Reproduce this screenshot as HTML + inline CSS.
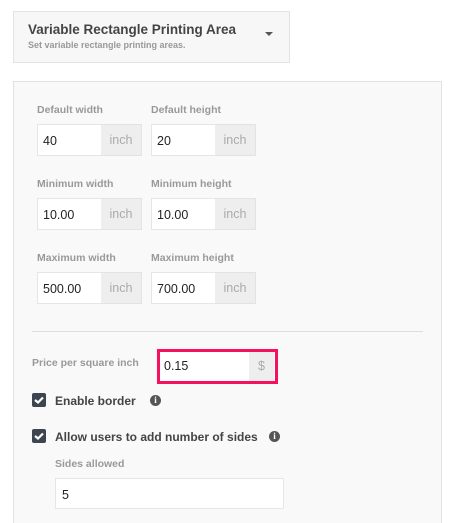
<!DOCTYPE html>
<html><head><style>
*{box-sizing:border-box;margin:0;padding:0}
html,body{width:455px;height:523px;overflow:hidden}
body{background:#fff;font-family:"Liberation Sans",sans-serif;position:relative}
.a{position:absolute}
.hdr{left:13px;top:11px;width:277px;height:52px;background:#f7f7f7;border:1px solid #e3e3e3}
.panel{left:13px;top:81px;width:429px;height:442px;background:#f9f9f9;border:1px solid #e2e2e2;border-bottom:none}
.lbl{font-size:10.5px;font-weight:bold;color:#999}
.inp{background:#fff;border:1px solid #e6e6e6;height:32px;font-size:12.5px;color:#222;padding:9px 0 0 5px}
.add{background:#eee;border:1px solid #e3e3e3;border-left:none;height:32px;font-size:12.5px;color:#aaa;text-align:center;padding-top:8px}
.cb{width:14px;height:14px;background:#3d4550;border-radius:2px}
.cb svg{position:absolute;left:2px;top:3px}
.ct{font-size:12px;font-weight:bold;color:#444}
.info{width:11px;height:11px;border-radius:50%;background:#555;color:#fff;font-size:9px;font-weight:bold;text-align:center;line-height:11px;font-family:"Liberation Serif",serif}
</style></head><body>
<div class="a hdr"></div>
<div class="a" style="left:28px;top:22px;font-size:13.5px;font-weight:bold;color:#444">Variable Rectangle Printing Area</div>
<div class="a" style="left:28px;top:40px;font-size:9px;font-weight:bold;color:#999">Set variable rectangle printing areas.</div>
<div class="a" style="left:265px;top:32px;width:0;height:0;border-left:4px solid transparent;border-right:4px solid transparent;border-top:4px solid #555"></div>
<div class="a panel"></div>

<div class="a lbl" style="left:37px;top:104px">Default width</div>
<div class="a lbl" style="left:151px;top:104px">Default height</div>
<div class="a inp" style="left:37px;top:124px;width:65px">40</div><div class="a add" style="left:101px;top:124px;width:41px">inch</div>
<div class="a inp" style="left:151px;top:124px;width:65px">20</div><div class="a add" style="left:215px;top:124px;width:41px">inch</div>

<div class="a lbl" style="left:37px;top:178px">Minimum width</div>
<div class="a lbl" style="left:151px;top:178px">Minimum height</div>
<div class="a inp" style="left:37px;top:198px;width:65px">10.00</div><div class="a add" style="left:101px;top:198px;width:41px">inch</div>
<div class="a inp" style="left:151px;top:198px;width:65px">10.00</div><div class="a add" style="left:215px;top:198px;width:41px">inch</div>

<div class="a lbl" style="left:37px;top:252px">Maximum width</div>
<div class="a lbl" style="left:151px;top:252px">Maximum height</div>
<div class="a inp" style="left:37px;top:272px;width:65px">500.00</div><div class="a add" style="left:101px;top:272px;width:41px">inch</div>
<div class="a inp" style="left:151px;top:272px;width:65px">700.00</div><div class="a add" style="left:215px;top:272px;width:41px">inch</div>

<div class="a" style="left:32px;top:331px;width:391px;height:1px;background:#ddd"></div>

<div class="a lbl" style="left:32px;top:357px">Price per square inch</div>
<div class="a" style="left:157px;top:349px;width:121px;height:35px;border:3px solid #f7105e;background:#fff"></div>
<div class="a" style="left:164px;top:359px;font-size:12.5px;color:#222">0.15</div>
<div class="a" style="left:249px;top:352px;width:25px;height:29px;background:#eee;color:#aaa;font-size:12.5px;text-align:center;padding-top:7px">$</div>

<div class="a cb" style="left:32px;top:393px"><svg width="10" height="8" viewBox="0 0 10 8"><path d="M1 4 L4 6.5 L9 1.5" stroke="#fff" stroke-width="2.2" fill="none"/></svg></div>
<div class="a ct" style="left:55px;top:394px">Enable border</div>
<div class="a info" style="left:150px;top:395px">i</div>

<div class="a cb" style="left:32px;top:429px"><svg width="10" height="8" viewBox="0 0 10 8"><path d="M1 4 L4 6.5 L9 1.5" stroke="#fff" stroke-width="2.2" fill="none"/></svg></div>
<div class="a ct" style="left:55px;top:430px">Allow users to add number of sides</div>
<div class="a info" style="left:269px;top:431px">i</div>

<div class="a lbl" style="left:55px;top:458px">Sides allowed</div>
<div class="a inp" style="left:55px;top:478px;width:229px;height:31px;padding-left:6px">5</div>
</body></html>
